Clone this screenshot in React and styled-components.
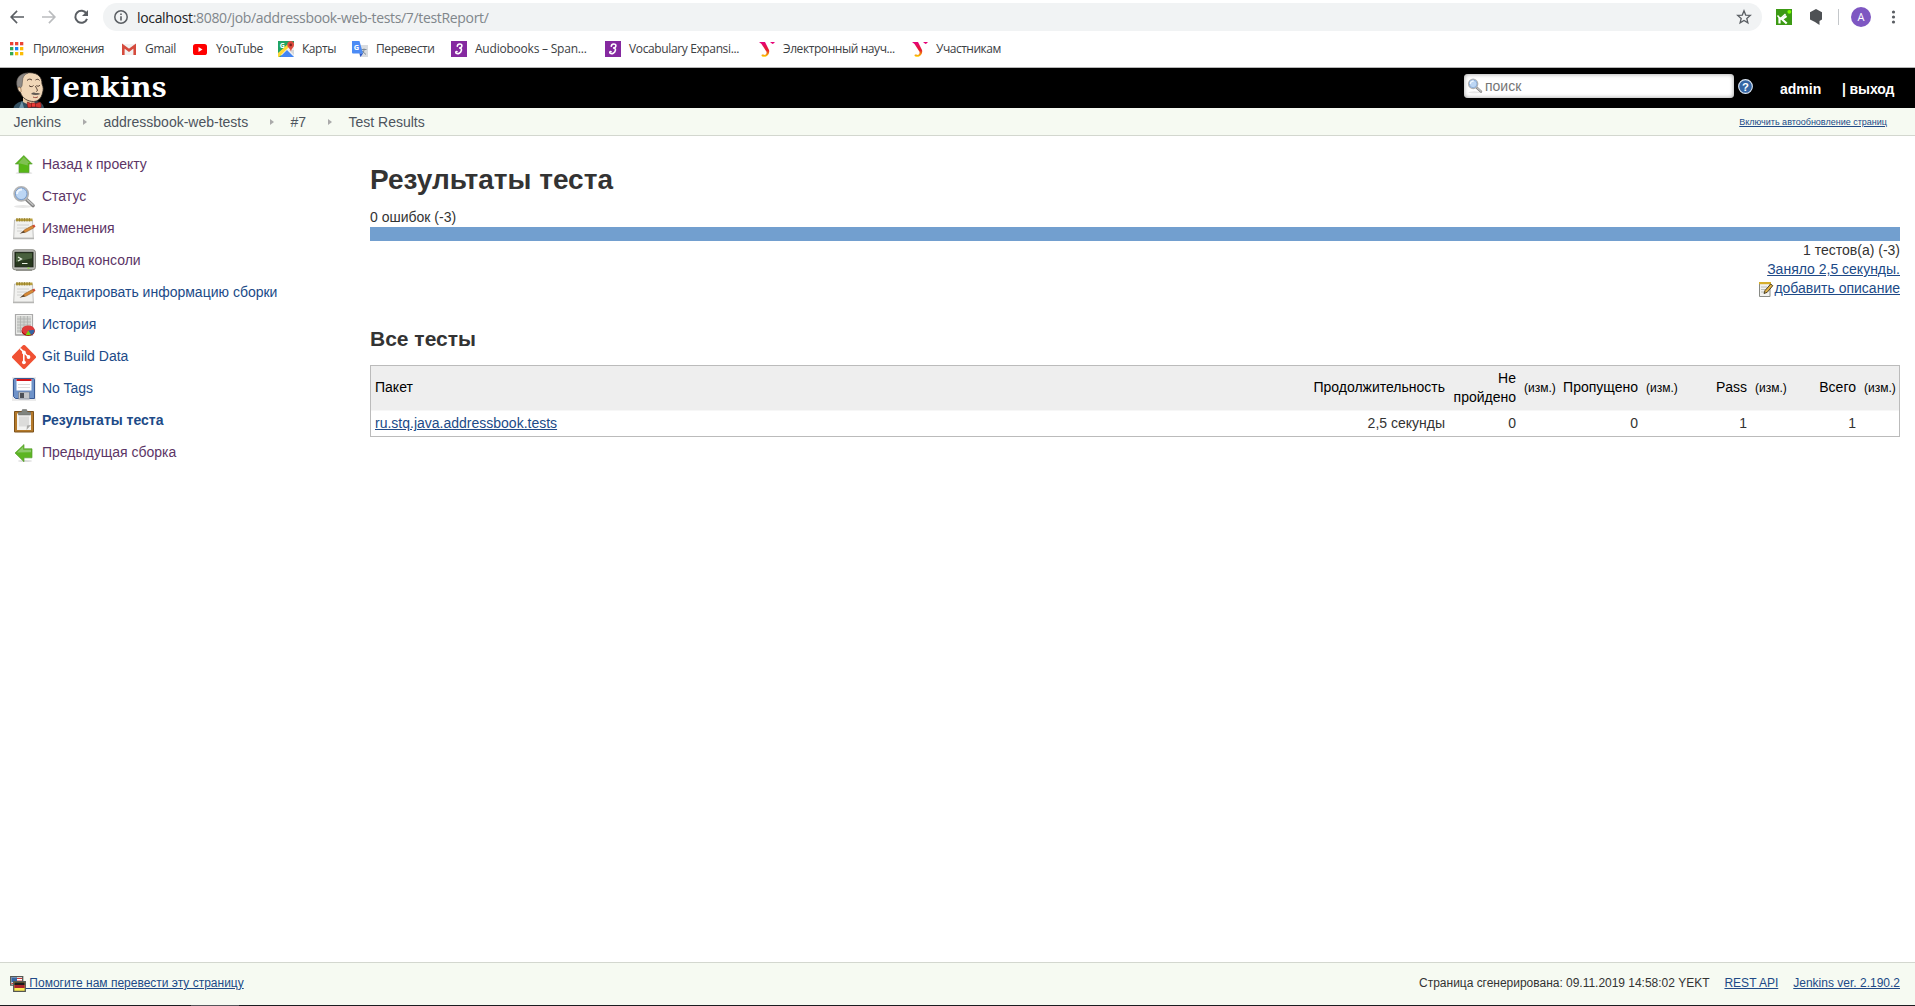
import React from 'react';
import styled, { createGlobalStyle } from 'styled-components';

const Global = createGlobalStyle`
  * { box-sizing: border-box; }
  body { margin: 0; background: #fff; color: #333; font: 14px/19px "Liberation Sans", Arial, sans-serif; }
`;
const Page = styled.div`
  display: flex;
  flex-direction: column;
  height: 1006px;
  overflow: hidden;
`;
const Text = styled.span`
  white-space: pre;
  letter-spacing: ${p => p.$ls || 0}px;
`;

/* ---------- browser chrome ---------- */
const Chrome = styled.div`
  height: 68px;
  border-bottom: 1px solid #b6b6b6;
  font-family: "Open Sans", "Noto Sans", sans-serif;
`;
const Toolbar = styled.div`
  display: flex;
  align-items: center;
  height: 34px;
  padding-left: 9px;
`;
const NavIcons = styled.div`
  display: flex;
  gap: 16px;
  width: 94px;
`;
const Omnibox = styled.div`
  display: flex;
  align-items: center;
  width: 1659px;
  height: 28px;
  padding: 0 10px;
  border-radius: 14px;
  background: #f1f3f4;
  color: #80868b;
  font-size: 14px;
`;
const Url = styled.div`
  flex: 1;
  margin-left: 8px;
  white-space: pre;
  letter-spacing: -0.33px;
  b { font-weight: 400; color: #202124; }
`;
const Extensions = styled.div`
  display: flex;
  align-items: center;
  margin-left: 14px;
`;
const HexSlot = styled.div`
  display: flex;
  margin-left: 17px;
`;
const Divider = styled.div`
  width: 1px;
  height: 16px;
  margin: 0 12px 0 15px;
  background: #c4c7ca;
`;
const Avatar = styled.div`
  width: 20px;
  height: 20px;
  margin-right: 20px;
  border-radius: 50%;
  background: #7e57c2;
  color: #fff;
  font-size: 11px;
  line-height: 20px;
  text-align: center;
`;
const Bookmarks = styled.div`
  display: flex;
  align-items: center;
  height: 30px;
  padding-left: 9px;
  color: #3c4043;
  font-size: 12px;
`;
const Bookmark = styled.div`
  display: flex;
  align-items: center;
  gap: 8px;
  width: ${p => p.$w}px;
  svg { flex: none; }
  span { margin-top: -1px; }
`;

/* ---------- jenkins header ---------- */
const Header = styled.div`
  display: flex;
  height: 40px;
  padding-left: 12px;
  background: #000;
  color: #fff;
  font-weight: 700;
`;
const Logo = styled.div`
  display: flex;
  flex: 1;
`;
const Wordmark = styled.div`
  margin-left: 4px;
  font: 700 27px/37px "Noto Serif", "DejaVu Serif", serif;
  transform: scaleX(1.145);
  transform-origin: left;
`;
const Search = styled.div`
  display: flex;
  align-items: center;
  gap: 2px;
  width: 270px;
  height: 24px;
  margin-top: 6px;
  padding-left: 3px;
  border-radius: 4px;
  background: #fff;
  box-shadow: inset 0 0 4px #999;
  color: #757575;
  font-weight: 400;
`;
const Help = styled.div`
  display: flex;
  width: 15px;
  height: 15px;
  margin: 11px 0 0 4px;
`;
const User = styled.div`
  width: 62px;
  margin: 13px 0 0 27px;
  line-height: 16px;
`;
const Logout = styled.div`
  width: 73px;
  margin-top: 13px;
  line-height: 16px;
`;
const Crumbs = styled.div`
  display: flex;
  align-items: center;
  height: 28px;
  padding: 1px 28px 0 13.5px;
  border-bottom: 1px solid #d3d7cf;
  background: #f6faf2;
  color: #4d545d;
`;
const Crumb = styled.div`
  display: flex;
  align-items: center;
  justify-content: space-between;
  width: ${p => p.$w}px;
  padding-right: 17px;
`;
const Arrow = styled.i`
  width: 0;
  height: 0;
  border: 3.5px solid transparent;
  border-left: 4px solid #aaa;
  border-right: 0;
`;
const Refresh = styled.a`
  margin-left: auto;
  color: #204a87;
  font-size: 9px;
  text-decoration: underline;
`;

/* ---------- body ---------- */
const Body = styled.div`
  display: flex;
  flex: 1;
`;
const Side = styled.nav`
  width: 370px;
  padding: 12px 0 0 12px;
`;
const Task = styled.a`
  display: flex;
  align-items: center;
  gap: 6px;
  height: 32px;
  color: ${p => (p.$visited ? '#5c3566' : '#204a87')};
  font-weight: ${p => (p.$active ? 700 : 400)};
  svg { margin-top: 2px; }
`;
const Main = styled.main`
  width: 1530px;
  padding-top: 27px;
`;
const H1 = styled.h1`
  margin: 0;
  font-size: 28px;
  line-height: 34px;
`;
const H2 = styled.h2`
  margin: 0;
  font-size: 21px;
  line-height: 26px;
`;
const Failures = styled.div`margin-top: 11px;`;
const Bar = styled.div`
  height: 14px;
  background: #729fcf;
`;
const Facts = styled.div`
  display: flex;
  flex-direction: column;
  align-items: flex-end;
  margin-bottom: 28px;
`;
const Fact = styled.div`
  display: flex;
  align-items: center;
  height: 19px;
`;
const Link = styled.a`
  color: ${p => (p.$visited ? '#5c3566' : '#204a87')};
  text-decoration: underline;
  white-space: pre;
`;
const Table = styled.div`
  margin-top: 13px;
  border: 1px solid #bbb;
`;
const Row = styled.div`
  display: grid;
  grid-template-columns: 938px 140px 71px 39px 83px 39px 70px 39px 70px 39px;
  align-items: center;
  height: ${p => (p.$head ? 45 : 25)}px;
  padding-bottom: ${p => (p.$head ? 1 : 0)}px;
  border-bottom: ${p => (p.$head ? '1px solid #f7f7f7' : '0')};
  background: ${p => (p.$head ? '#eee' : '#fff')};
  color: ${p => (p.$head ? '#000' : '#333')};
`;
const Cell = styled.div`
  padding: 0 4px;
  margin-top: ${p => (p.$small ? 1 : 0)}px;
  font-size: ${p => (p.$small ? 12 : 14)}px;
  text-align: ${p => (p.$left ? 'left' : 'right')};
`;
const Footer = styled.footer`
  display: flex;
  align-items: center;
  height: 43px;
  padding: 0 15px 1px 10px;
  border-top: 1px solid #d3d7cf;
  background: #f6faf2;
  font-size: 12px;
`;
const FooterInfo = styled.div`
  display: flex;
  gap: 15px;
  margin-left: auto;
`;
const ScreenEdge = styled.div`
  height: 1px;
  background: linear-gradient(90deg, #1c1c20 191px, #55555a 191px 239px, #1c1c20 239px);
`;

/* ---------- drawings ---------- */
const Svg = ({ s = 24, v = 24, children }) => <svg width={s} height={s} viewBox={`0 0 ${v} ${v}`}>{children}</svg>;

const AppsIcon = () => (
  <Svg s={16} v={16}>
    {['#ea4335', '#ea4335', '#ea4335', '#34a853', '#1a83f0', '#fbbc05', '#34a853', '#fbbc05', '#fbbc05'].map((c, i) => (
      <rect key={i} x={1 + (i % 3) * 5} y={1 + Math.floor(i / 3) * 5} width="3.3" height="3.3" fill={c} />
    ))}
  </Svg>
);
const GmailIcon = () => (
  <Svg s={16} v={16}>
    <path d="M1 3h14v11H1z" fill="#f2f2f2" />
    <path d="M2.300 14V5L8 9.300 13.700 5V14" fill="none" stroke="#d54b3d" strokeWidth="2.600" />
  </Svg>
);
const YouTubeIcon = () => (
  <Svg s={16} v={16}>
    <rect x="1" y="3" width="14" height="11" rx="2.6" fill="#f00" />
    <path d="M6.500 6v5l4-2.500z" fill="#fff" />
  </Svg>
);
const MapsIcon = () => (
  <Svg s={16} v={16}>
    <path d="M0 0h16v16H0z" fill="#1fa463" />
    <path d="M0 14 14 1l2 2v13z" fill="#f2f2f2" />
    <path d="M0 12 10 3l2 2L1 16H0z" fill="#fdd835" />
    <path d="M2 16l7-7 7 7z" fill="#4285f4" />
    <path d="M11 9l5 5V9z" fill="#d5d8db" />
    <path d="M12.500 0a3.700 3.700 0 0 1 3.500 4c0 2.500-2.600 3.500-3 6.500C12.300 7.500 9.300 6.500 9.300 4A3.500 3.500 0 0 1 12.500 0z" fill="#dd4b3e" />
    <circle cx="12.700" cy="3.900" r="1.300" fill="#7b231e" />
    <text x="1.700" y="6.800" fontSize="7" fontWeight="700" fill="#fff">G</text>
  </Svg>
);
const TranslateIcon = () => (
  <Svg s={16} v={16}>
    <path d="M5 4h11v12H8z" fill="#d9dce0" />
    <path d="M9.500 8.500h5M12 7.500v1c0 2-1 3.500-2 4.500m0-3 4 3.500" stroke="#7f8b96" fill="none" />
    <path d="M0 0h7.500L11 12.500H1A1 1 0 0 1 0 11.500z" fill="#4b8bf5" />
    <path d="M7.500 12.500H11L8.500 16z" fill="#2a56c6" />
    <text x="1.800" y="9.200" fontSize="7.500" fontWeight="700" fill="#fff">G</text>
  </Svg>
);
const PurpleIcon = () => (
  <Svg s={16} v={16}>
    <path d="M0 0h16v16H0z" fill="#8529a0" />
    <path d="M6.300 5.200C6.500 2.500 11 2.300 10.900 4.700 10.800 6.200 9.200 7 8 7c1.800-.2 2.700.8 2.400 2.400C9.900 12 7 13.300 5.300 12.400c-1-.7-.5-2.200.8-1.700" fill="none" stroke="#fff" strokeWidth="1.600" strokeLinecap="round" />
  </Svg>
);
const UrfuIcon = ({ id }) => (
  <Svg s={16} v={16}>
    <defs>
      <linearGradient id={id} x1="0" y1="0" x2="0" y2="1">
        <stop offset="0" stopColor="#e6007e" /><stop offset=".55" stopColor="#e3202b" /><stop offset="1" stopColor="#ffd500" />
      </linearGradient>
    </defs>
    <path d="M0 1h6l4 8c.9 3-1 6-3.500 6.700-2 .5-4-.3-4-1.200 0-1.300 1.500-1.200 2.500-.7 1.500.5 3-1 2.500-3L2.500 3zM11 1h5L14.500 2.500 13.500 3z" fill={`url(#${id})`} />
  </Svg>
);
const BackIcon = () => <Svg s={16}><path d="M22.500 11H6l7-7.200L11.300 2 1.500 12l9.800 10L13 20.300 6 13.200h16.500z" fill="#5a5e63" /></Svg>;
const ForwardIcon = () => <Svg s={16}><path d="M1.500 11H18l-7-7.200L12.700 2l9.800 10-9.800 10-1.700-1.700 7-7.100H1.500z" fill="#babcbe" /></Svg>;
const ReloadIcon = () => (
  <Svg s={16} v={16}>
    <path d="M13.500 4.700A6 6 0 1 0 14 9.800" fill="none" stroke="#5a5e63" strokeWidth="2" />
    <path d="M15 1v6H9z" fill="#5a5e63" />
  </Svg>
);
const InfoIcon = () => (
  <Svg s={16} v={16}>
    <circle cx="8" cy="8" r="6.200" fill="none" stroke="#5a5e63" strokeWidth="1.500" />
    <path d="M8 7.200v4.300M8 4.500v1.500" stroke="#5a5e63" strokeWidth="1.600" />
  </Svg>
);
const StarIcon = () => <Svg s={16} v={16}><path d="M8 1.800l1.700 4.300 4.600.3-3.500 3 1.100 4.500L8 11.500l-3.900 2.400 1.100-4.500-3.500-3 4.600-.3z" fill="none" stroke="#5a5e63" strokeWidth="1.300" /></Svg>;
const KatalonIcon = () => (
  <Svg s={16} v={16}>
    <path d="M0 0h16v16H0z" fill="#3c9a14" />
    <path d="M3.500 8v6.500M10.500 7 6 10.200l4.700 4.300" fill="none" stroke="#fff" strokeWidth="2.200" />
    <path d="M1.500 6.500l2.800 3.300L9.500 5" fill="none" stroke="#fff" strokeWidth="1.500" />
    <circle cx="13.300" cy="2.800" r="1.900" fill="#7dff00" />
  </Svg>
);
const HexIcon = () => <svg width="14" height="16" viewBox="0 0 14 16"><path d="M7 0l6 3.200v7.300L10.500 12v4L6 13l-5-2.500V3.200z" fill="#4e5154" /></svg>;
const DotsIcon = () => <svg width="6" height="16" viewBox="0 0 6 16">{[3, 8, 13].map(y => <circle key={y} cx="2.500" cy={y} r="1.600" fill="#5a5e63" />)}</svg>;

const JenkinsFace = () => (
  <svg width="34" height="40" viewBox="0 0 34 40">
    <path d="M1.500 40c1-4 5-6 9-7h14c4.500 1 6.500 3 7.500 7z" fill="#335061" />
    <path d="M11 26h12v8l-4 4-8-4z" fill="#e8c9a4" />
    <path d="M10 33l-3 7h5z" fill="#6f93a8" />
    <path d="M5.500 18C3.500 9 10 4.500 18 4.700c8 .2 12 4.300 12 11.300 1.500 3 1.500 6 .5 9-1 5-4.500 8.500-9 8.500-6 0-11.500-3.500-13-9C6 23.500 5.500 21 5.500 18z" fill="#f0d6b7" stroke="#2b2420" strokeWidth=".8" />
    <path d="M5.500 20C2.500 10 8 5.300 16 5c-3.500 1.500-5.500 4-5.500 8L10 18l-1.500 2-1-1.500z" fill="#8d8986" stroke="#4a4642" strokeWidth=".5" />
    <path d="M6 20c2-1.500 3.500 0 3 4" fill="none" stroke="#a8835e" />
    <path d="M15 12.500c1.500-1.800 4-1.800 5-.3M23.500 12c1.500-1 3-1 4 .5M17 17.500c1 1.500 3.500 1.500 4.500 0M24.500 17.500c1 1 2.500 1 3.500-.5M23.500 18c.8 2.500 3 4.500 1 5.500" fill="none" stroke="#49352a" />
    <path d="M19 26c2-2 4-1.500 5-.8 1.500-.6 3-.2 4.500.8-3 1.200-6.500 1.400-9.500 0z" fill="#5f5751" />
    <path d="M21 29c2 1 4 .7 5-.3" stroke="#9c4c3e" fill="none" />
    <path d="M15.500 34l5.500 2.500 7-2.500c1.500 2 1.500 4.500.5 6l-7-1.500-5 1.500c-1.500-2-1.500-4-1-6z" fill="#d33833" stroke="#701414" strokeWidth=".6" />
    <rect x="19.500" y="35" width="4" height="4" fill="#ef3d3a" stroke="#701414" strokeWidth=".6" />
  </svg>
);
const HelpIcon = () => (
  <Svg s={15} v={16}>
    <circle cx="8" cy="8" r="7.300" fill="#3465a4" stroke="#dce7f5" strokeWidth="1.200" />
    <text x="8" y="12.400" fontSize="12" fontWeight="700" fill="#fff" textAnchor="middle">?</text>
  </Svg>
);
const Lens = ({ s }) => (
  <Svg s={s}>
    <ellipse cx="11" cy="21.500" rx="9" ry="1.500" fill="#e7e7e7" />
    <path d="M14.500 14.500l6.500 6" stroke="#808080" strokeWidth="3.600" strokeLinecap="round" />
    <path d="M15.500 15l5.500 5" stroke="#c4c4c4" strokeWidth="1.600" strokeLinecap="round" />
    <circle cx="9.200" cy="8.800" r="7" fill="#c6dbf2" stroke="#b4b4b4" strokeWidth="1.800" />
    <circle cx="9.200" cy="8.800" r="5.800" fill="#bcd6f4" stroke="#6d93c6" strokeWidth=".9" />
    <path d="M5 9c0-3 2-4.500 5-4.500" stroke="#eef6ff" strokeWidth="2" fill="none" />
  </Svg>
);
const UpIcon = () => (
  <Svg>
    <ellipse cx="12" cy="20" rx="8.500" ry="1.200" fill="#ddd" />
    <path d="M11.800 2.500l8.500 8.500h-3.300v8.500H7V11H3.300z" fill="#57b716" stroke="#5a9e35" strokeWidth=".7" />
    <path d="M11.800 4l6 6h-2v2.500L8 10.500H6z" fill="#7fc152" />
  </Svg>
);
const LeftIcon = () => (
  <Svg>
    <ellipse cx="13" cy="20" rx="7" ry="1" fill="#ddd" />
    <path d="M3 12l9-8.500v4.300h8v9h-8v4z" fill="#5cb522" stroke="#5a9e35" strokeWidth=".7" />
    <path d="M5 11.500l6.200-6v3.300H19v2.500z" fill="#8cc96a" />
  </Svg>
);
const NotepadIcon = () => (
  <Svg>
    <path d="M1 21.500h21" stroke="#b5b5b3" strokeWidth="1.500" />
    <path d="M2.500 3h18l.8 18H1.700z" fill="#f1f1ef" stroke="#b9b9b7" strokeWidth=".9" />
    <path d="M4 1.500h16.500v2.700H4z" fill="#b9a040" />
    <path d="M5 1v3.500M7.500 1v3.500M10 1v3.500M12.500 1v3.500M15 1v3.500M17.500 1v3.500" stroke="#8b7728" strokeWidth=".7" />
    <path d="M5 8h12M5 11h10M5 14h5" stroke="#d0d0ce" />
    <path d="M10 15.500l2.500-2.700 8-4.300 1.400 2.300-8.200 4.500z" fill="#d98a36" stroke="#8f5a24" strokeWidth=".6" />
    <path d="M20.300 8.600l2-1 1.200 2.200-1.800 1z" fill="#cf4a34" />
    <path d="M7.500 16.800l4.200-3 1.300 1.600z" fill="#5b4630" />
  </Svg>
);
const SmallNotepadIcon = () => (
  <Svg s={16} v={16}>
    <path d="M1.500 2h10.500v13.500H1.500z" fill="#f1f1ef" stroke="#888a85" />
    <path d="M1 1h12v2.200H1z" fill="#d5ad2b" />
    <path d="M3 6h6M3 8.500h4.500M3 11h3" stroke="#babdb6" />
    <path d="M6 12.500l1-3L12.700 3l2.100 1.700-5.600 6.600z" fill="#e2b043" stroke="#3d3319" strokeWidth=".9" />
  </Svg>
);
const ConsoleIcon = () => (
  <Svg>
    <path d="M4 20h16v2H4z" fill="#999a94" />
    <rect x=".6" y=".8" width="22.800" height="20" rx="2.500" fill="#bcbdb8" stroke="#85867f" />
    <rect x="3" y="3.300" width="18" height="14.500" fill="#28391f" stroke="#1a2316" />
    <path d="M4 4.300h16v5L4 13z" fill="#48603d" />
    <path d="M6 8l3.500 2L6 12M10 14.500h5.500" stroke="#e8f0e2" strokeWidth="1.200" fill="none" />
    <rect x="15.500" y="18.500" width="2" height="1.200" fill="#8ae234" />
  </Svg>
);
const HistoryIcon = () => (
  <Svg>
    <path d="M3.500 1.500H20.500V22H3.500z" fill="#efefed" stroke="#aaa" strokeWidth="1.200" />
    <path d="M5 3h14v17H5z" fill="#d3d5d2" />
    <path d="M8.500 3v17M12 3v17M15.500 3v17M5 6h14M5 9h14M5 12h14M5 15h14M5 18h14" stroke="#aeb0ad" strokeWidth=".8" />
    <path d="M3.500 22h17" stroke="#999" />
    <ellipse cx="16.200" cy="18" rx="6.600" ry="5" fill="#a40000" />
    <ellipse cx="16.200" cy="17" rx="6.300" ry="4.600" fill="#df3c3c" />
    <path d="M16.200 17.500l6.200-.8c0 3-1.400 4.500-3.500 5z" fill="#3465a4" />
    <path d="M16.200 17.500l2.700 4.200c-1.700.7-3.400.6-5.200.2z" fill="#73d216" />
  </Svg>
);
const GitIcon = () => (
  <Svg>
    <path d="M10.700.6a1.800 1.800 0 0 1 2.600 0l10.100 10.100a1.800 1.800 0 0 1 0 2.600L13.300 23.400a1.800 1.800 0 0 1-2.600 0L.6 13.300a1.800 1.800 0 0 1 0-2.600z" fill="#f05133" />
    <path d="M8.200 3.500l3.600 3.600v10.400M12 7.500l4.500 4.500" fill="none" stroke="#fff" strokeWidth="1.600" />
    <circle cx="11.900" cy="7.400" r="1.900" fill="#fff" /><circle cx="16.500" cy="12" r="1.900" fill="#fff" /><circle cx="11.900" cy="17.300" r="1.900" fill="#fff" />
  </Svg>
);
const FloppyIcon = () => (
  <Svg>
    <path d="M0 0h24v24H0z" fill="#ececec" />
    <path d="M1.500 2.500a1 1 0 0 1 1-1h19a1 1 0 0 1 1 1v19h-19l-2-2z" fill="#6f93c9" stroke="#3a5a94" />
    <path d="M4.500 2h15v11.500h-15z" fill="#fff" />
    <path d="M4.500 2h15v2h-15z" fill="#d4151a" />
    <path d="M6 7.500h12M6 10.500h12" stroke="#ddd" />
    <path d="M6.500 15h11v7h-11z" fill="#c2c5c8" stroke="#65748c" strokeWidth=".6" />
    <path d="M8 16h4v5H8z" fill="#4c5057" />
  </Svg>
);
const ClipboardIcon = () => (
  <Svg>
    <path d="M2.500 2.500h19v20.500h-19z" fill="#b57a2b" stroke="#7d521a" />
    <path d="M5 4.500h14V21H5z" fill="#f4f4f2" />
    <path d="M7 7.500h10v10H7z" fill="#dcdcda" />
    <path d="M14.500 21l.5-4.500 4-.5z" fill="#a9a9a6" />
    <path d="M6.500 3h3l1-2.500h4l1 2.500h3v3h-12z" fill="#80847e" stroke="#666" strokeWidth=".5" />
  </Svg>
);
const FlagsIcon = () => (
  <Svg s={16} v={16}>
    <path d="M.7.7h12v8.500h-12z" fill="#fff" stroke="#555753" strokeWidth="1.300" />
    <path d="M6 2.500h6M6 5h6M1.500 7.500h11" stroke="#cc3b3b" strokeWidth="1.200" />
    <path d="M1.400 1.400H7v4.800H1.400z" fill="#3465a4" />
    <path d="M3.700 5.700h11.600v9.600H3.700z" fill="#fce94f" stroke="#555753" strokeWidth="1.300" />
    <path d="M4.300 6.300h10.400V9H4.300z" fill="#1b1b1b" /><path d="M4.300 9h10.400v3H4.300z" fill="#a8232b" />
  </Svg>
);

/* ---------- data ---------- */
const bookmarks = [
  ['Приложения', 112, -0.43, <AppsIcon />],
  ['Gmail', 71, -0.3, <GmailIcon />],
  ['YouTube', 86, -0.35, <YouTubeIcon />],
  ['Карты', 74, -0.45, <MapsIcon />],
  ['Перевести', 99, -0.42, <TranslateIcon />],
  ['Audiobooks – Span...', 154, -0.22, <PurpleIcon />],
  ['Vocabulary Expansi...', 154, -0.37, <PurpleIcon />],
  ['Электронный науч...', 153, -0.42, <UrfuIcon id="urfu-a" />],
  ['Участникам', 100, -0.48, <UrfuIcon id="urfu-b" />],
];
const tasks = [
  ['Назад к проекту', <UpIcon />, true],
  ['Статус', <Lens />, true],
  ['Изменения', <NotepadIcon />, true],
  ['Вывод консоли', <ConsoleIcon />, true],
  ['Редактировать информацию сборки', <NotepadIcon />, false],
  ['История', <HistoryIcon />, false],
  ['Git Build Data', <GitIcon />, false],
  ['No Tags', <FloppyIcon />, false],
  ['Результаты теста', <ClipboardIcon />, false, true],
  ['Предыдущая сборка', <LeftIcon />, true],
];

export default function App() {
  return (
    <Page>
      <Global />
      <Chrome>
        <Toolbar>
          <NavIcons><BackIcon /><ForwardIcon /><ReloadIcon /></NavIcons>
          <Omnibox>
            <InfoIcon />
            <Url><b>localhost</b>:8080/job/addressbook-web-tests/7/testReport/</Url>
            <StarIcon />
          </Omnibox>
          <Extensions>
            <KatalonIcon /><HexSlot><HexIcon /></HexSlot><Divider /><Avatar>A</Avatar><DotsIcon />
          </Extensions>
        </Toolbar>
        <Bookmarks>
          {bookmarks.map(([label, w, ls, icon]) => (
            <Bookmark key={label} $w={w}>{icon}<Text $ls={ls}>{label}</Text></Bookmark>
          ))}
        </Bookmarks>
      </Chrome>
      <Header>
        <Logo><JenkinsFace /><Wordmark>Jenkins</Wordmark></Logo>
        <Search><Lens s={16} /><Text>поиск</Text></Search>
        <Help><HelpIcon /></Help>
        <User>admin</User>
        <Logout><Text $ls={-0.1}>| выход</Text></Logout>
      </Header>
      <Crumbs>
        <Crumb $w={90}>Jenkins<Arrow /></Crumb>
        <Crumb $w={187}>addressbook-web-tests<Arrow /></Crumb>
        <Crumb $w={58}>#7<Arrow /></Crumb>
        <Text>Test Results</Text>
        <Refresh>Включить автообновление страниц</Refresh>
      </Crumbs>
      <Body>
        <Side>
          {tasks.map(([label, icon, visited, active]) => (
            <Task key={label} $visited={visited} $active={active}>{icon}<Text>{label}</Text></Task>
          ))}
        </Side>
        <Main>
          <H1>Результаты теста</H1>
          <Failures>0 ошибок (-3)</Failures>
          <Bar />
          <Facts>
            <Fact>1 тестов(а) (-3)</Fact>
            <Fact><Link>Заняло 2,5 секунды.</Link></Fact>
            <Fact><SmallNotepadIcon /><Link>добавить описание</Link></Fact>
          </Facts>
          <H2>Все тесты</H2>
          <Table>
            <Row $head>
              <Cell $left>Пакет</Cell>
              <Cell>Продолжительность</Cell>
              <Cell>Не пройдено</Cell><Cell $small>(изм.)</Cell>
              <Cell>Пропущено</Cell><Cell $small>(изм.)</Cell>
              <Cell>Pass</Cell><Cell $small>(изм.)</Cell>
              <Cell>Всего</Cell><Cell $small>(изм.)</Cell>
            </Row>
            <Row>
              <Cell $left><Link>ru.stq.java.addressbook.tests</Link></Cell>
              <Cell>2,5 секунды</Cell>
              <Cell>0</Cell><Cell />
              <Cell>0</Cell><Cell />
              <Cell>1</Cell><Cell />
              <Cell>1</Cell><Cell />
            </Row>
          </Table>
        </Main>
      </Body>
      <Footer>
        <FlagsIcon />
        <Link> Помогите нам перевести эту страницу</Link>
        <FooterInfo>
          <Text $ls={-0.02}>Страница сгенерирована: 09.11.2019 14:58:02 YEKT</Text>
          <Link>REST API</Link>
          <Link>Jenkins ver. 2.190.2</Link>
        </FooterInfo>
      </Footer>
      <ScreenEdge />
    </Page>
  );
}
